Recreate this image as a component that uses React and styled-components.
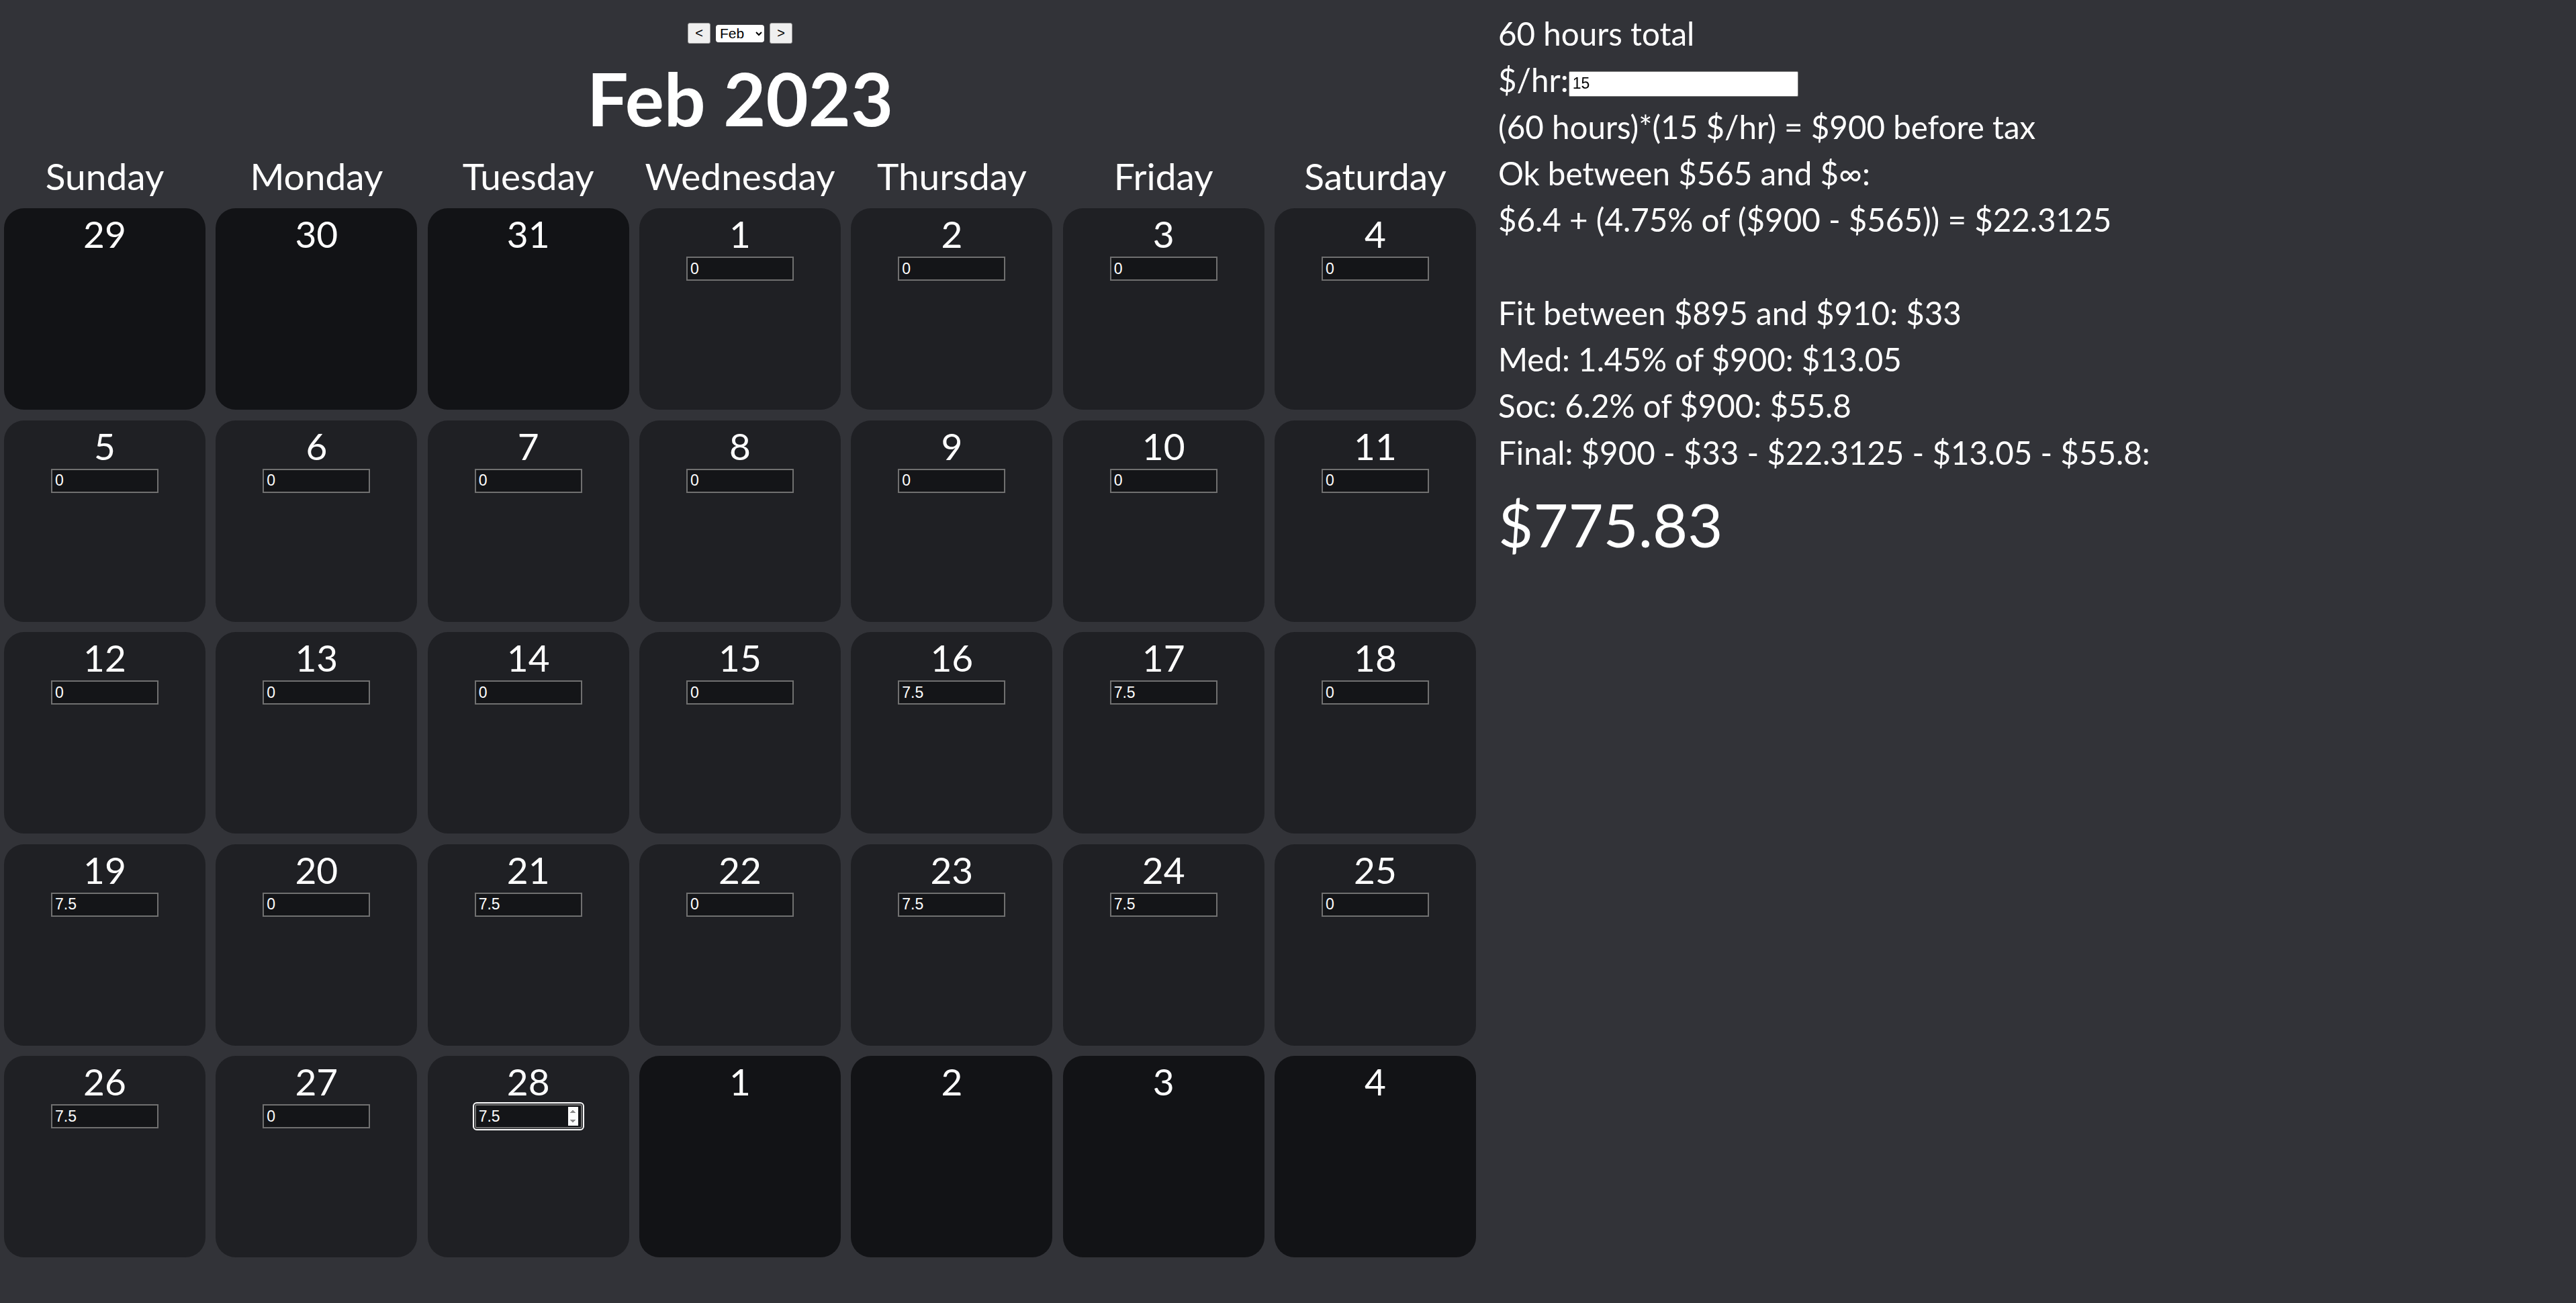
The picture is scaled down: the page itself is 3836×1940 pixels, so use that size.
import React, { useState } from "react";
import styled, { createGlobalStyle } from "styled-components";

const GlobalStyle = createGlobalStyle`
  html, body {
    margin: 0;
    padding: 0;
    background-color: #323338;
    color: #fff;
    font-family: Lato, "Segoe UI", "Open Sans", sans-serif;
  }
`;

const MONTHS = ["Jan", "Feb", "Mar", "Apr", "May", "Jun", "Jul", "Aug", "Sep", "Oct", "Nov", "Dec"];
const WEEKDAYS = ["Sunday", "Monday", "Tuesday", "Wednesday", "Thursday", "Friday", "Saturday"];

// feb 2023 starts on a wednesday
const buildDays = () => {
  const days = [29, 30, 31].map((n) => ({ day: n, inMonth: false }));
  for (let i = 1; i <= 28; i++) days.push({ day: i, inMonth: true });
  [1, 2, 3, 4].forEach((n) => days.push({ day: n, inMonth: false }));
  return days;
};

const initialHours = { 16: "7.5", 17: "7.5", 19: "7.5", 21: "7.5", 23: "7.5", 24: "7.5", 26: "7.5", 28: "7.5" };

const round4 = (n) => Math.round(n * 10000) / 10000;

export default function App() {
  const [hours, setHours] = useState(() => {
    const h = {};
    for (let i = 1; i <= 28; i++) h[i] = initialHours[i] || "0";
    return h;
  });
  const [rate, setRate] = useState("15");
  const [month, setMonth] = useState("Feb");

  const total = round4(Object.values(hours).reduce((acc, v) => acc + (parseFloat(v) || 0), 0));
  const gross = round4(total * (parseFloat(rate) || 0));
  const state = round4(6.4 + 0.0475 * (gross - 565));
  const fed = 33;
  const med = round4(0.0145 * gross);
  const soc = round4(0.062 * gross);
  const net = Math.floor((gross - fed - state - med - soc) * 100 + 1e-6) / 100;

  return (
    <>
      <GlobalStyle />
      <Page>
        <CalendarColumn>
          <NavBar>
            <NavButton>{"<"}</NavButton>
            <MonthSelect value={month} onChange={(e) => setMonth(e.target.value)}>
              {MONTHS.map((m) => (
                <option key={m} value={m}>
                  {m}
                </option>
              ))}
            </MonthSelect>
            <NavButton>{">"}</NavButton>
          </NavBar>
          <Title>{month} 2023</Title>
          <Grid>
            {WEEKDAYS.map((d) => (
              <Weekday key={d}>{d}</Weekday>
            ))}
            {buildDays().map((d, i) => (
              <DayCell key={i} inMonth={d.inMonth}>
                <DayNumber>{d.day}</DayNumber>
                {d.inMonth && (
                  <HoursInput
                    type="number"
                    active={d.day === 28}
                    autoFocus={d.day === 28}
                    value={hours[d.day]}
                    onChange={(e) => setHours({ ...hours, [d.day]: e.target.value })}
                  />
                )}
              </DayCell>
            ))}
          </Grid>
        </CalendarColumn>
        <Summary>
          <Line>{total} hours total</Line>
          <Line>
            $/hr:
            <RateInput type="text" value={rate} onChange={(e) => setRate(e.target.value)} />
          </Line>
          <Line>
            ({total} hours)*({rate} $/hr) = ${gross} before tax
          </Line>
          <Line>Ok between $565 and $∞:</Line>
          <Line>
            $6.4 + (4.75% of (${gross} - $565)) = ${state}
          </Line>
          <Line />
          <Line>Fit between $895 and $910: ${fed}</Line>
          <Line>
            Med: 1.45% of ${gross}: ${med}
          </Line>
          <Line>
            Soc: 6.2% of ${gross}: ${soc}
          </Line>
          <Line>
            Final: ${gross} - ${fed} - ${state} - ${med} - ${soc}:
          </Line>
          <Net>${net}</Net>
        </Summary>
      </Page>
    </>
  );
}

const Page = styled.div`
  display: flex;
  align-items: flex-start;
  gap: 33px;
  min-height: 100vh;
  padding-left: 6px;
  box-sizing: border-box;
`;

const CalendarColumn = styled.div`
  width: 2192px;
  display: flex;
  flex-direction: column;
  align-items: center;
  padding-top: 34px;
`;

const NavBar = styled.div`
  display: flex;
  align-items: center;
  gap: 8px;
  height: 31px;
`;

const NavButton = styled.button`
  width: 34px;
  height: 31px;
  padding: 0;
  background-color: #efefef;
  border: 1px solid #9a9a9a;
  border-radius: 3px;
  color: #000;
  font-family: "Liberation Sans", Arial, sans-serif;
  font-size: 20px;
`;

const MonthSelect = styled.select`
  width: 72px;
  height: 26px;
  padding: 0 2px;
  border: none;
  border-radius: 4px;
  background-color: #fff;
  color: #000;
  font-family: "Liberation Sans", Arial, sans-serif;
  font-size: 21px;
`;

const Title = styled.h1`
  margin: 16px 0 0;
  font-size: 109px;
  font-weight: 700;
  line-height: 1.2;
`;

const Grid = styled.div`
  margin-top: 17px;
  display: grid;
  grid-template-columns: repeat(7, 300px);
  column-gap: 15.33px;
  row-gap: 15.5px;
`;

const Weekday = styled.div`
  font-size: 55px;
  line-height: 66px;
  text-align: center;
`;

const DayCell = styled.div`
  height: 300px;
  border-radius: 30px;
  background-color: ${({ inMonth }) => (inMonth ? "#1f2024" : "#121316")};
  display: flex;
  flex-direction: column;
  align-items: center;
  padding-top: 5px;
  box-sizing: border-box;
`;

const DayNumber = styled.div`
  font-size: 55px;
  line-height: 66px;
`;

const HoursInput = styled.input`
  width: 160px;
  height: 36px;
  margin-top: 1px;
  box-sizing: border-box;
  padding: 0 4px;
  background-color: #141518;
  border: 2px solid #707070;
  color: #fff;
  font-family: "Liberation Sans", Arial, sans-serif;
  font-size: 23px;
  outline: ${({ active }) => (active ? "2px solid #fff" : "none")};
  outline-offset: 1px;
  border-radius: ${({ active }) => (active ? "3px" : "0")};
  &::-webkit-inner-spin-button {
    -webkit-appearance: ${({ active }) => (active ? "inner-spin-button" : "none")};
    opacity: 1;
    margin: 0;
    height: 28px;
  }
`;

const Summary = styled.div`
  padding-top: 15px;
  font-size: 47.5px;
`;

const Line = styled.div`
  height: 69.3px;
  line-height: 69.3px;
  white-space: nowrap;
`;

const RateInput = styled.input`
  width: 342px;
  height: 38px;
  box-sizing: border-box;
  padding: 0 5px;
  margin-left: 0;
  background-color: #fff;
  border: 1px solid #767676;
  border-radius: 2px;
  color: #000;
  font-family: "Liberation Sans", Arial, sans-serif;
  font-size: 23px;
  vertical-align: 5px;
`;

const Net = styled.div`
  margin-top: 18px;
  font-size: 90px;
  line-height: 1.2;
`;
